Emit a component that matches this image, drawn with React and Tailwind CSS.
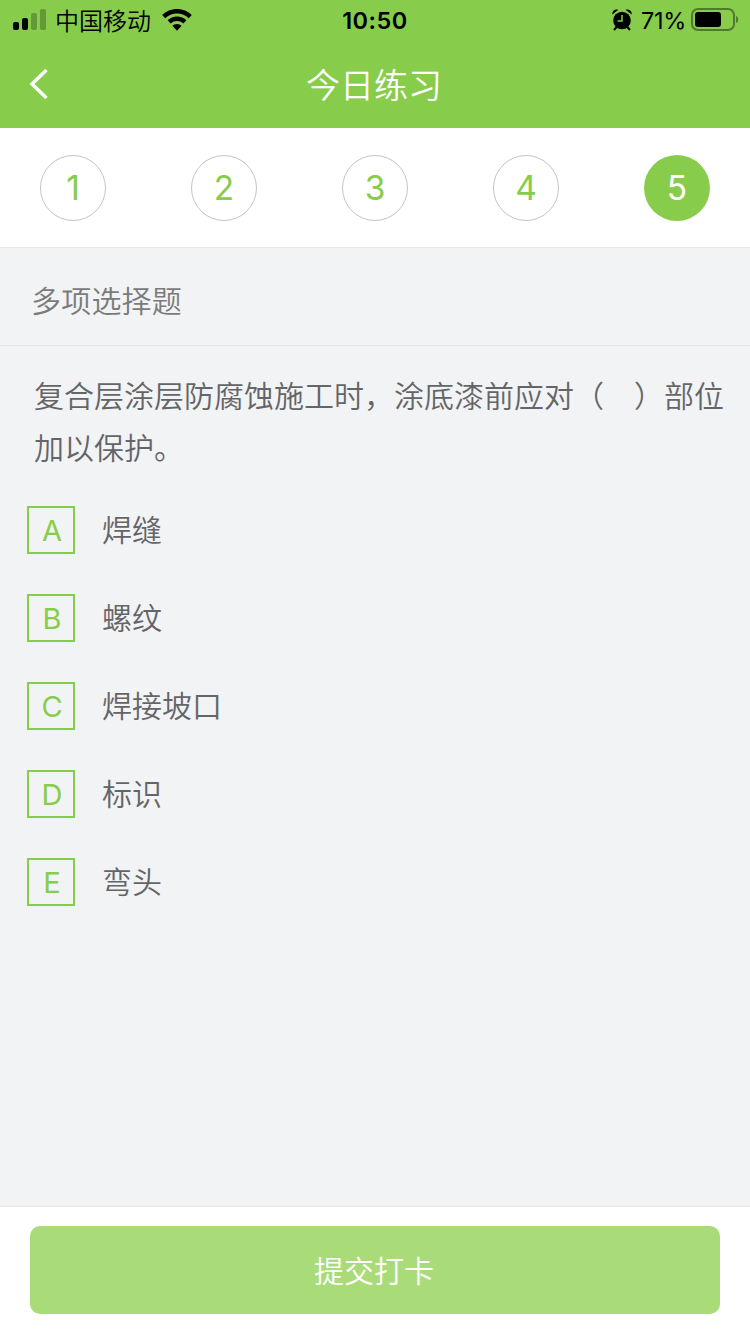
const font = "font-['Inter','Noto_Sans_CJK_SC',sans-serif]";

const options = [
  ['A', '焊缝'],
  ['B', '螺纹'],
  ['C', '焊接坡口'],
  ['D', '标识'],
  ['E', '弯头'],
];

function StatusBar() {
  return (
    <div className="relative flex h-10 items-center justify-between text-black">
      <div className="flex h-10 items-center pl-[13px]">
        <svg width="34" height="22" viewBox="0 0 34 22">
          <rect x="0" y="13" width="6" height="8" rx="2" />
          <rect x="9" y="9" width="6" height="12" rx="2" />
          <rect x="18" y="4" width="6" height="17" rx="2" opacity=".25" />
          <rect x="27" y="0" width="6" height="21" rx="2" opacity=".25" />
        </svg>
        <span className="ml-2 pt-[3px] text-[24px] font-[350] leading-10">中国移动</span>
        <svg className="ml-[11px]" width="30" height="22" viewBox="0 0 30 22">
          <path d="M15 0C9.300 0 4 2.200.2 6l3 3.200A16.500 16.500 0 0 1 15 4.400a16.500 16.500 0 0 1 11.800 4.800L29.800 6C26 2.200 20.700 0 15 0Z" />
          <path d="M15 7.600c-3.600 0-6.900 1.400-9.400 3.700l3 3.200a9.500 9.500 0 0 1 12.800 0l3-3.200A13.700 13.700 0 0 0 15 7.600Z" />
          <path d="M15 15c-1.800 0-3.400.7-4.600 1.800L15 21.800l4.600-5A6.600 6.600 0 0 0 15 15Z" />
        </svg>
      </div>
      <span className="absolute inset-x-0 top-px text-center text-[23.500px] font-semibold leading-10 tracking-[0.5px]">10:50</span>
      <div className="flex h-10 items-center pr-[11px]">
        <svg width="20" height="22" viewBox="0 0 20 22">
          <circle cx="10" cy="11.500" r="8.800" />
          <path d="M.3 5.500A4.500 4.500 0 0 1 6.500.8ZM19.700 5.500A4.500 4.500 0 0 0 13.500.8Z" />
          <path d="m2 21 3.500-4M18 21l-3.500-4" stroke="#000" strokeWidth="2" />
          <path d="M10 6v6H5.500" fill="none" stroke="#87cc4b" strokeWidth="1.500" />
        </svg>
        <span className="ml-[9px] pt-[2px] text-[23.500px] font-normal leading-10 tracking-[-0.300px]">71%</span>
        <svg className="ml-[5px]" width="48" height="24" viewBox="0 0 48 24">
          <rect x="1" y="1" width="42" height="21" rx="6" fill="none" stroke="#000" strokeOpacity=".4" strokeWidth="2" />
          <rect x="4" y="4" width="26" height="15" rx="3" />
          <path d="M45 8v7c3-1 3-6 0-7Z" opacity=".4" />
        </svg>
      </div>
    </div>
  );
}

export default function App() {
  return (
    <div className={`flex h-[1334px] w-[750px] flex-col bg-[#f2f3f5] ${font}`}>
      <header className="h-32 bg-[#87cc4b]">
        <StatusBar />
        <div className="flex h-[88px] items-center">
          <svg className="ml-[28px]" width="22" height="32" viewBox="0 0 22 32" fill="none" stroke="white" strokeWidth="3.500">
            <path d="M18.500 2 4 16l14.500 14" />
          </svg>
          <h1 className="ml-[256px] pt-[3px] text-[34px] font-[350] leading-[85px] text-white">今日练习</h1>
        </div>
      </header>
      <nav className="flex h-[120px] items-center justify-between border-b border-[#e5e6e8] bg-white px-10">
        {[1, 2, 3, 4].map((n) => (
          <div key={n} className="flex size-[66px] items-center justify-center rounded-full border border-[#c4c4c4] pt-[2px] text-[33.500px] font-normal text-[#87cc4b]">{n}</div>
        ))}
        <div className="flex size-[66px] items-center justify-center rounded-full bg-[#87cc4b] pt-[2px] text-[33.500px] font-normal text-white">5</div>
      </nav>
      <h2 className="h-[98px] border-b border-[#e5e6e8] pl-[31px] pt-2 text-[30px] font-[350] leading-[90px] tracking-[0.200px] text-[#7b7b7b]">多项选择题</h2>
      <main className="flex-1">
        <p className="pl-[34px] pt-6 text-[30px] font-[350] leading-[52px] text-[#646567]">
          复合层涂层防腐蚀施工时，涂底漆前应对（　）部位<br />加以保护。
        </p>
        <div className="mt-8 flex flex-col gap-10 pl-[27px]">
          {options.map(([key, label]) => (
            <div key={key} className="flex h-12 items-center">
              <div className="flex size-12 items-center justify-center border-2 border-[#87cc4b] pl-[2px] pt-[2px] text-[29px] font-normal text-[#87cc4b]">{key}</div>
              <span className="ml-[27px] text-[30px] font-[350] leading-[48px] text-[#646567]">{label}</span>
            </div>
          ))}
        </div>
      </main>
      <footer className="h-32 border-t border-[#e5e6e8] bg-white px-[30px] pt-[19px]">
        <button className="block h-[88px] w-full rounded-[10px] bg-[#a9dc79] pr-[2px] pt-[2px] text-[30px] font-[350] text-white">提交打卡</button>
      </footer>
    </div>
  );
}
